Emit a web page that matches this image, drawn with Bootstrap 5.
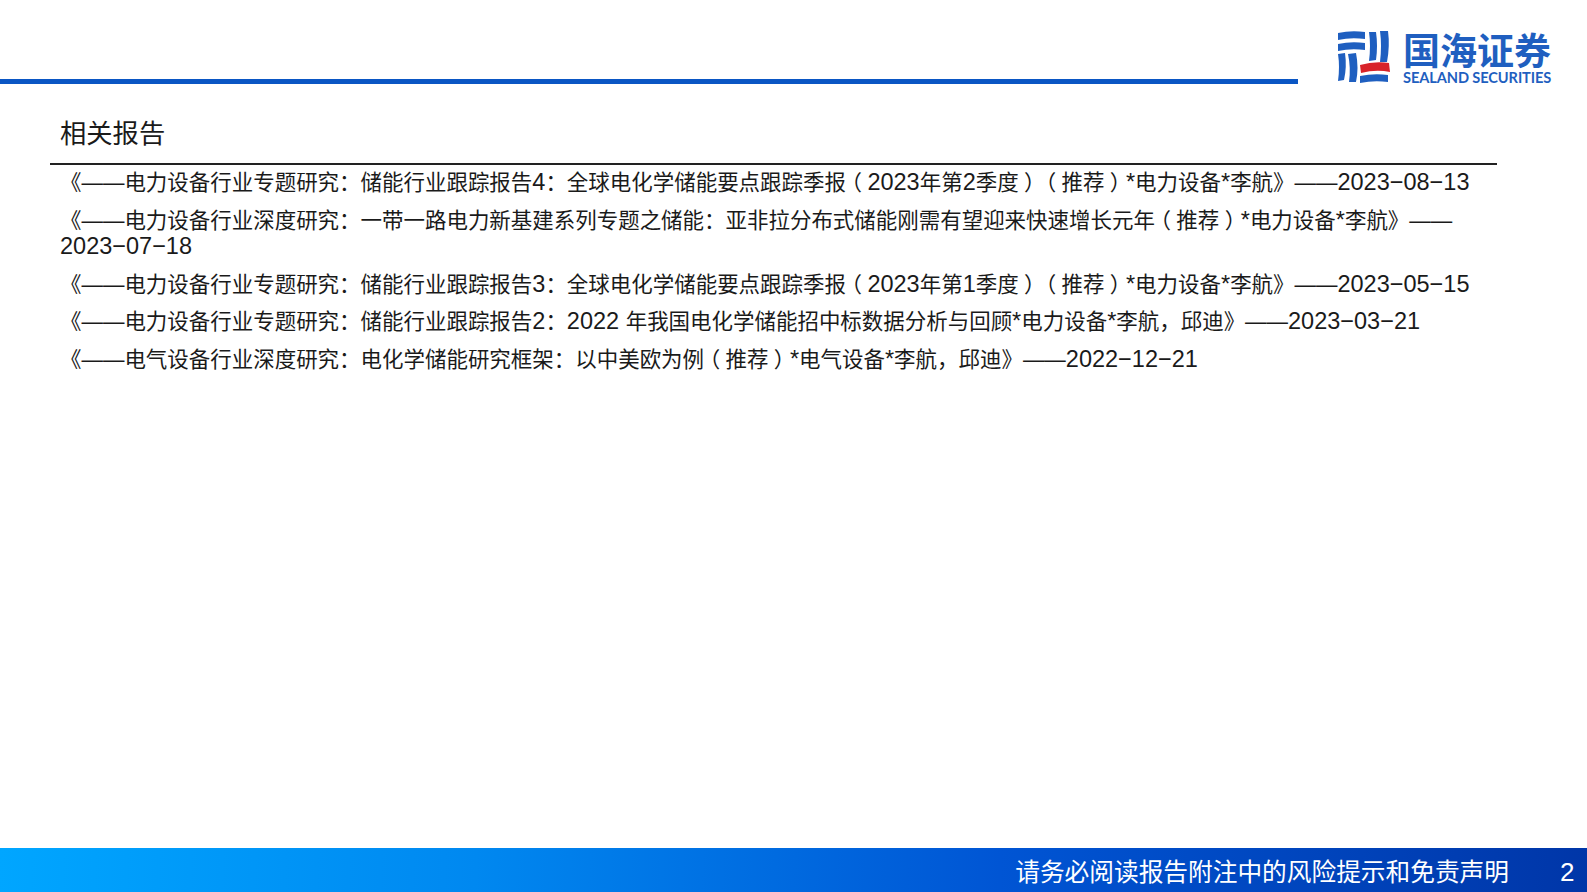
<!DOCTYPE html>
<html lang="zh">
<head>
<meta charset="utf-8">
<title>相关报告</title>
<link href="https://cdn.jsdelivr.net/npm/bootstrap@5.3.0/dist/css/bootstrap.min.css" rel="stylesheet">
<style>
html,body{height:100%;margin:0;background:#fff}
body{font-family:"Liberation Sans","Noto Sans CJK SC",sans-serif;color:#1a1a1a;overflow:hidden;text-spacing-trim:space-all}
.slide{height:892px}
.head{height:84px}
.rule-wrap{width:1298px;height:84px}
.rule{height:5px;background:#0a56c4}
.logo{width:289px;height:84px;padding:30px 0 0 38px}
.logo svg{margin-right:13px;flex:none}
.logo-cn{font-family:"Noto Sans CJK SC",sans-serif;font-weight:700;font-size:37px;line-height:39px;color:#1f5fc0;white-space:nowrap}
.logo-en{font-family:"Lato",sans-serif;font-weight:700;font-size:14.6px;line-height:14px;color:#1f5fc0;white-space:nowrap;letter-spacing:-.1px;margin-top:2px}
.title{font-size:26.3px;line-height:36px;margin:0;padding:32px 0 0 60px;height:79px;font-weight:400}
.list-wrap{margin:0 90px 0 50px;border-top:2px solid #222;padding:5px 0 0 10px}
.rep{font-size:21.48px;line-height:26px;margin:0 0 11.75px}
.l{font-size:23.5px;line-height:1}
.d{font-size:23.5px;line-height:1;white-space:nowrap}
.p{font-family:"Noto Sans CJK TC",sans-serif;line-height:1}
.q{font-feature-settings:"halt";padding:0 .25em;line-height:1}
.foot{height:44px;background:linear-gradient(93deg,#00a6ff 0%,#0088f0 30%,#0055d4 63%,#0036a8 100%);color:#fff}
.foot-text{font-size:24.7px;line-height:49px;margin-right:51px}
.foot-num{font-size:26px;line-height:48px;width:27px}
</style>
</head>
<body>
<div class="slide d-flex flex-column">
  <header class="head d-flex">
    <div class="rule-wrap d-flex flex-column justify-content-end"><div class="rule"></div></div>
    <div class="logo d-flex">
      <svg width="54" height="54" viewBox="0 0 54 54" aria-hidden="true">
        <g fill="#1f5fc0">
          <path d="M2 3 Q15 0 29 2 L29 9 Q15 7 2 10Z"/>
          <path d="M2 14 Q15 11 29 13 L29 20 Q15 18 2 21Z"/>
          <path d="M2 24 L9 23 Q11 37 8 50 L2 51 Q4 37 2 24Z"/>
          <path d="M12 24 L20 23 Q23 38 20 52 L13 52 Q15 38 12 24Z"/>
          <path d="M33 2 L40 2 Q42 16 40 30 L33 31 Q35 16 33 2Z"/>
          <path d="M44 1 L52 1 Q54 16 51 32 L44 32 Q46 16 44 1Z"/>
          <path d="M24 46 Q38 43 52 45 L52 52 Q38 50 24 53Z"/>
        </g>
        <path d="M24 35 Q38 31 53 33 L54 42 Q40 39 25 43Z" fill="#d8232a"/>
      </svg>
      <div>
        <div class="logo-cn">国海证券</div>
        <div class="logo-en">SEALAND SECURITIES</div>
      </div>
    </div>
  </header>
  <h1 class="title">相关报告</h1>
  <div class="list-wrap flex-grow-1">
    <p class="rep">《——电力设备行业专题研究<span class="p">：</span>储能行业跟踪报告<span class="l">4</span><span class="p">：</span>全球电化学储能要点跟踪季报<span class="q">（</span><span class="l">2023</span>年第<span class="l">2</span>季度<span class="q">）</span><span class="q">（</span>推荐<span class="q">）</span><span class="l">*</span>电力设备<span class="l">*</span>李航》——<span class="d">2023−08−13</span></p>
    <p class="rep">《——电力设备行业深度研究<span class="p">：</span>一带一路电力新基建系列专题之储能<span class="p">：</span>亚非拉分布式储能刚需有望迎来快速增长元年<span class="q">（</span>推荐<span class="q">）</span><span class="l">*</span>电力设备<span class="l">*</span>李航》——<span class="d">2023−07−18</span></p>
    <p class="rep">《——电力设备行业专题研究<span class="p">：</span>储能行业跟踪报告<span class="l">3</span><span class="p">：</span>全球电化学储能要点跟踪季报<span class="q">（</span><span class="l">2023</span>年第<span class="l">1</span>季度<span class="q">）</span><span class="q">（</span>推荐<span class="q">）</span><span class="l">*</span>电力设备<span class="l">*</span>李航》——<span class="d">2023−05−15</span></p>
    <p class="rep">《——电力设备行业专题研究<span class="p">：</span>储能行业跟踪报告<span class="l">2</span><span class="p">：</span><span class="l">2022 </span>年我国电化学储能招中标数据分析与回顾<span class="l">*</span>电力设备<span class="l">*</span>李航，邱迪》——<span class="d">2023−03−21</span></p>
    <p class="rep">《——电气设备行业深度研究<span class="p">：</span>电化学储能研究框架<span class="p">：</span>以中美欧为例<span class="q">（</span>推荐<span class="q">）</span><span class="l">*</span>电气设备<span class="l">*</span>李航，邱迪》——<span class="d">2022−12−21</span></p>
  </div>
  <footer class="foot d-flex justify-content-end">
    <span class="foot-text">请务必阅读报告附注中的风险提示和免责声明</span>
    <span class="foot-num">2</span>
  </footer>
</div>
<script src="https://cdn.jsdelivr.net/npm/bootstrap@5.3.0/dist/js/bootstrap.bundle.min.js"></script>
</body>
</html>
